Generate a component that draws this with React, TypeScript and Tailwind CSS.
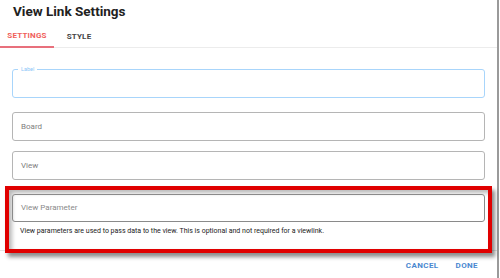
import React from "react";

function Field({ text }: { text: string }) {
  return (
    <div className="h-[29px] rounded-[3px] border border-[#b5b5b5] flex items-center pl-[8px] text-[8px] text-[#808080]">
      {text}
    </div>
  );
}

export default function App() {
  return (
    <div className="w-[500px] h-[278px] bg-white overflow-hidden" style={{ fontFamily: "Roboto, 'Liberation Sans', sans-serif" }}>
      <div className="w-[499px] h-[278px] border-r-2 border-[#9a9a9a] flex flex-col">
        <div className="pl-[13px] pt-[2px] text-[13.5px] font-bold leading-[19px] text-[#212121]">View Link Settings</div>
        <div className="mt-[5px] h-[22px] flex border-b border-[#ececec]">
          <div className="w-[54px] h-[22px] border-b-2 border-[#e8707c] flex items-center justify-center text-[8px] font-bold tracking-[0.2px] text-[#f0605a]">
            SETTINGS
          </div>
          <div className="ml-[12px] w-[26px] h-[22px] flex items-center justify-center text-[8px] font-bold tracking-[0.2px] text-[#444]">
            STYLE
          </div>
        </div>
        <div className="px-[12px] w-[497px]">
          <div className="mt-[21px] relative h-[29px] rounded-[3px] border border-[#a8d5fb]">
            <div className="absolute top-[-4px] left-[5px] bg-white px-[3px] text-[5.5px] leading-[7px] text-[#8cc6f7]">Label</div>
          </div>
          <div className="mt-[14px]"><Field text="Board" /></div>
          <div className="mt-[10px]"><Field text="View" /></div>
          <div className="relative z-10 mt-[6px] mx-[-7px] h-[67px] border-4 border-[#e00000] bg-white px-[3px] pt-[4px] shadow-[3px_4px_4px_rgba(0,0,0,0.45),inset_3px_3px_4px_rgba(0,0,0,0.28)]">
            <div className="h-[28px] rounded-[3px] border border-[#8a8a8a] flex items-center pl-[8px] text-[8px] text-[#8a8a8a]">
              View Parameter
            </div>
            <div className="mt-[5px] pl-[8px] text-[7px] leading-[8px] text-[#222] whitespace-nowrap">
              View parameters are used to pass data to the view. This is optional and not required for a viewlink.
            </div>
          </div>
        </div>
        <div className="mt-[-3px] border-t border-[#e4e4e4]" />
        <div className="flex justify-end gap-[17px] pr-[19px] mt-[9px] text-[8px] font-bold tracking-[0.4px] text-[#4a88d0]">
          <span>CANCEL</span>
          <span>DONE</span>
        </div>
      </div>
    </div>
  );
}
